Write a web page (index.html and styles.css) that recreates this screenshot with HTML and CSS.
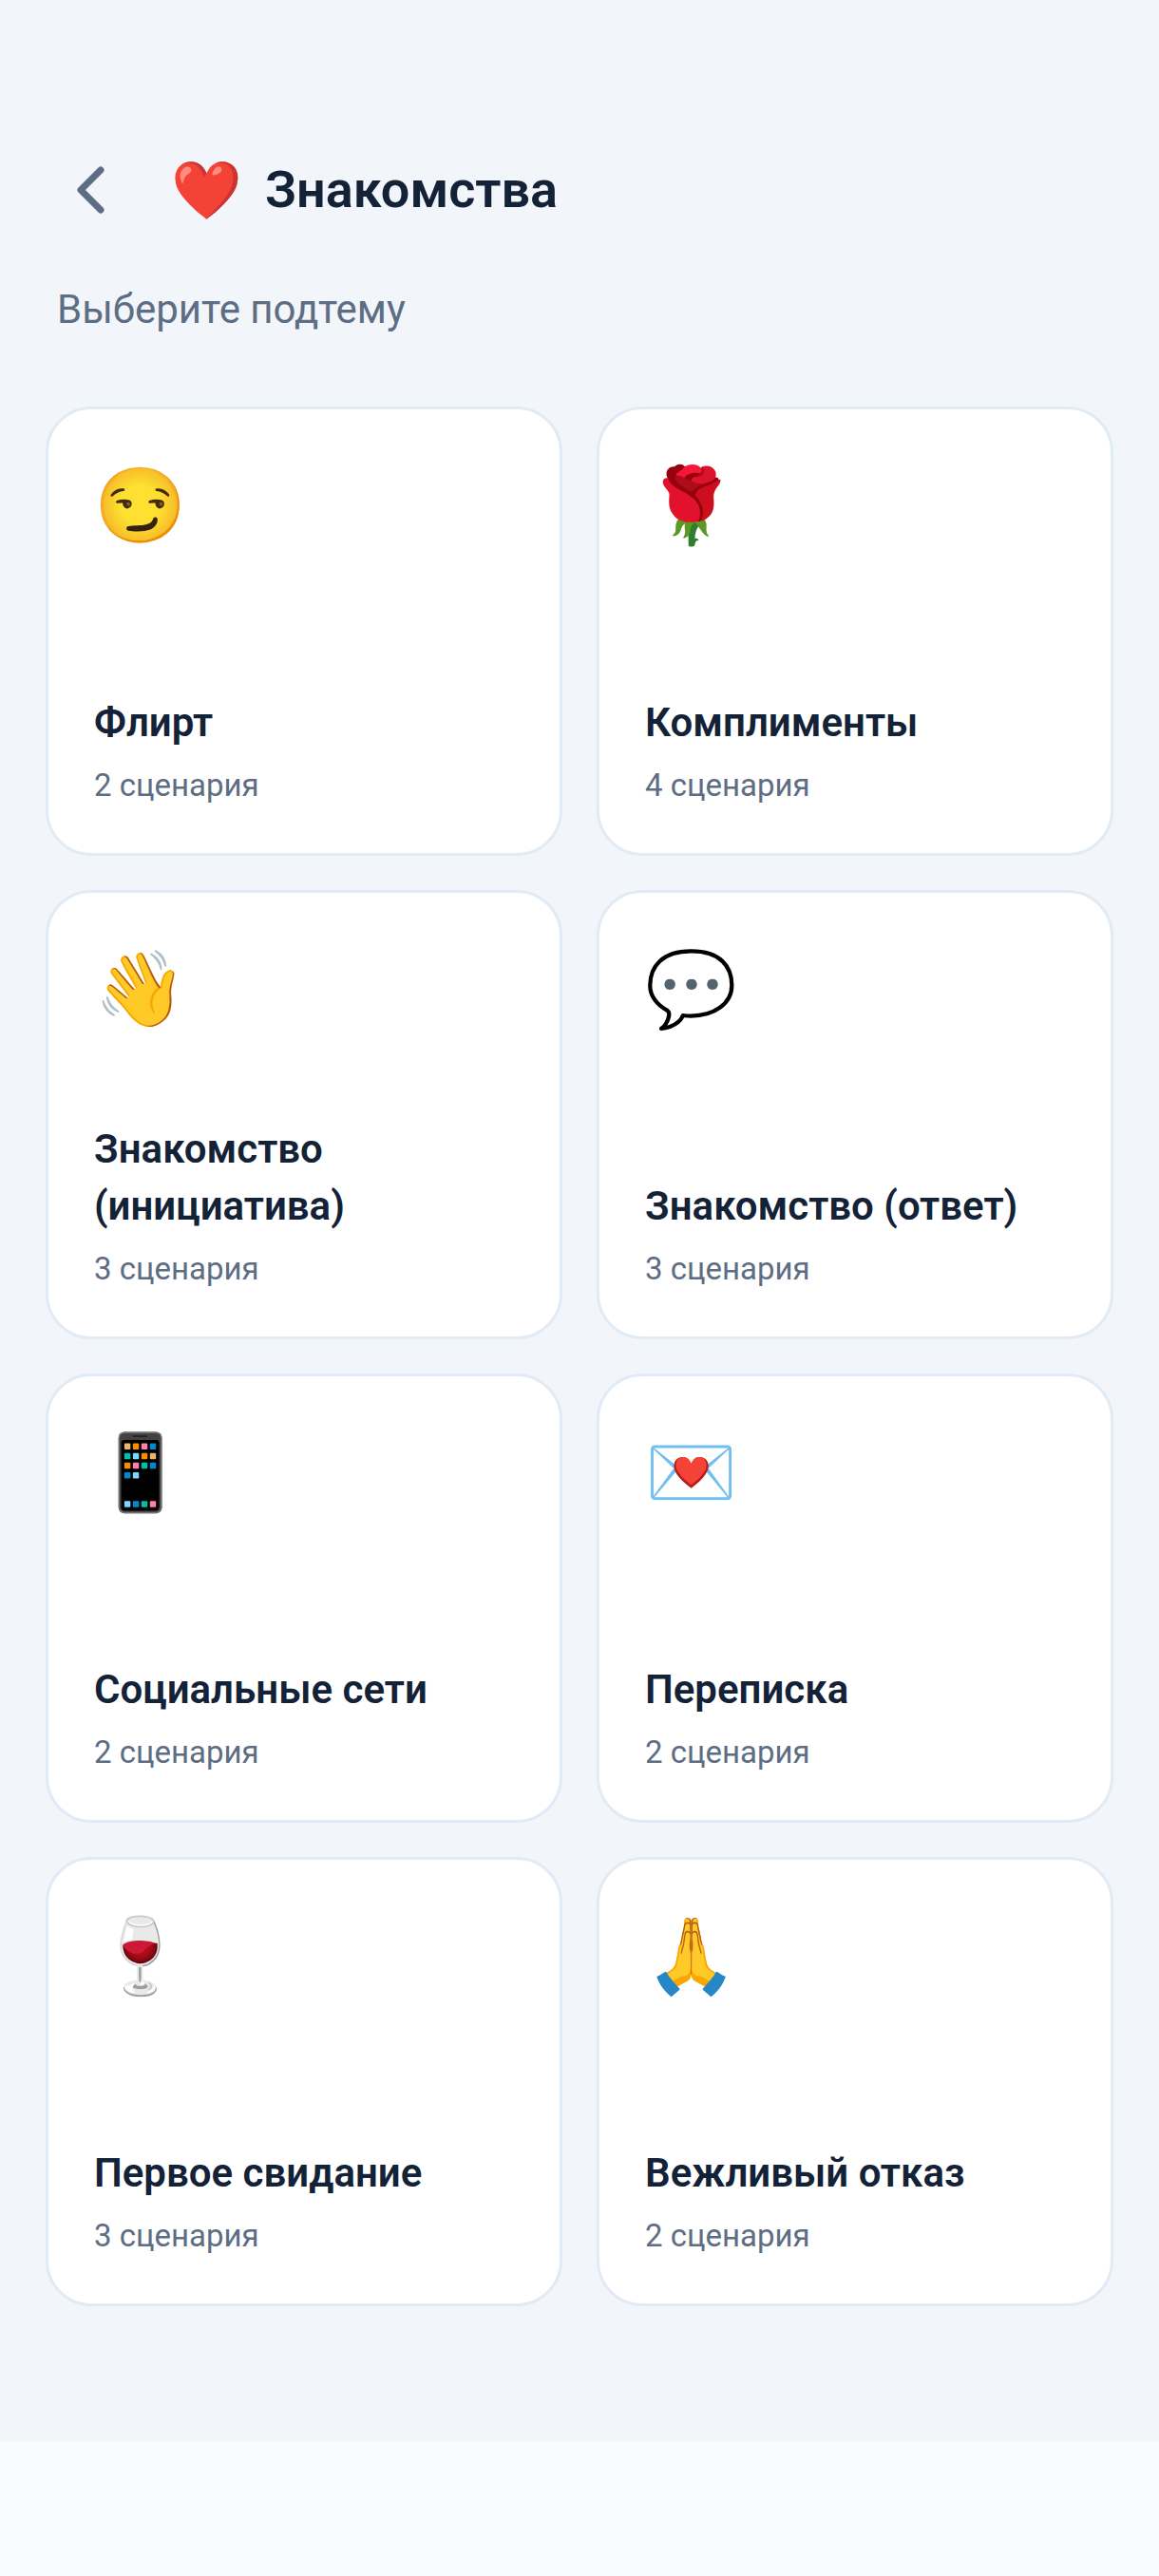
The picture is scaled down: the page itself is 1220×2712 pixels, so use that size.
FILE: index.html
```html
<!DOCTYPE html>
<html lang="ru">
<head>
    <meta charset="UTF-8" />
    <meta name="viewport" content="width=device-width, initial-scale=1" />
    <title>Знакомства</title>
    <link rel="stylesheet" href="styles.css">
</head>
<body>
    <header class="header">
        <button class="back" aria-label="Назад">
            <svg viewBox="0 0 96 96"><path d="M58 27 L37 48 L58 69" /></svg>
        </button>
        <span class="header-icon">❤️</span>
        <h1>Знакомства</h1>
    </header>
    <main>
        <p class="hint">Выберите подтему</p>
        <div class="grid">
            <a class="card" href="#"><span class="icon">😏</span><span class="name">Флирт</span><span class="count">2 сценария</span></a>
            <a class="card" href="#"><span class="icon">🌹</span><span class="name">Комплименты</span><span class="count">4 сценария</span></a>
            <a class="card" href="#"><span class="icon">👋</span><span class="name">Знакомство (инициатива)</span><span class="count">3 сценария</span></a>
            <a class="card" href="#"><span class="icon">💬</span><span class="name">Знакомство (ответ)</span><span class="count">3 сценария</span></a>
            <a class="card" href="#"><span class="icon">📱</span><span class="name">Социальные сети</span><span class="count">2 сценария</span></a>
            <a class="card" href="#"><span class="icon">💌</span><span class="name">Переписка</span><span class="count">2 сценария</span></a>
            <a class="card" href="#"><span class="icon">🍷</span><span class="name">Первое свидание</span><span class="count">3 сценария</span></a>
            <a class="card" href="#"><span class="icon">🙏</span><span class="name">Вежливый отказ</span><span class="count">2 сценария</span></a>
        </div>
    </main>
    <!-- Zona de navegación del sistema -->
    <footer class="nav-area"></footer>
</body>
</html>
```
FILE: styles.css
```css
* {
    box-sizing: border-box;
}
body {
    margin: 0;
    min-height: 100vh;
    display: flex;
    flex-direction: column;
    background-color: #f2f5fa;
    color: #142238;
    font-family: Roboto, "Noto Sans", sans-serif;
}
.header {
    display: flex;
    align-items: center;
    padding: 152px 48px 0;
}
.back {
    width: 96px;
    height: 96px;
    padding: 0;
    border: none;
    background: none;
    cursor: pointer;
}
.back svg {
    display: block;
    fill: none;
    stroke: #5d6d83;
    stroke-width: 7;
    stroke-linecap: round;
    stroke-linejoin: round;
}
.header-icon {
    margin: 0 24px 0 36px;
    font-size: 60px;
}
h1 {
    margin: 0;
    font-size: 54px;
    line-height: 72px;
    font-weight: 600;
}
main {
    flex: 1;
    padding: 48px 48px 0;
}
.hint {
    margin: 0;
    padding: 0 12px;
    font-size: 42px;
    line-height: 60px;
    color: #5d6d83;
}
.grid {
    display: grid;
    grid-template-columns: 1fr 1fr;
    gap: 36px;
    margin-top: 72px;
}
.card {
    display: flex;
    flex-direction: column;
    aspect-ratio: 1.15;
    padding: 48px;
    background-color: #fff;
    border: 3px solid #e1ebf5;
    border-radius: 48px;
    color: inherit;
    text-decoration: none;
}
.icon {
    margin-bottom: auto;
    font-size: 78px;
    line-height: 108px;
}
.name {
    font-size: 42px;
    line-height: 60px;
    font-weight: 600;
}
.count {
    margin-top: 12px;
    font-size: 33px;
    line-height: 47px;
    color: #5d6d83;
}
.nav-area {
    height: 142px;
    background-color: #fafbfd;
}
```
